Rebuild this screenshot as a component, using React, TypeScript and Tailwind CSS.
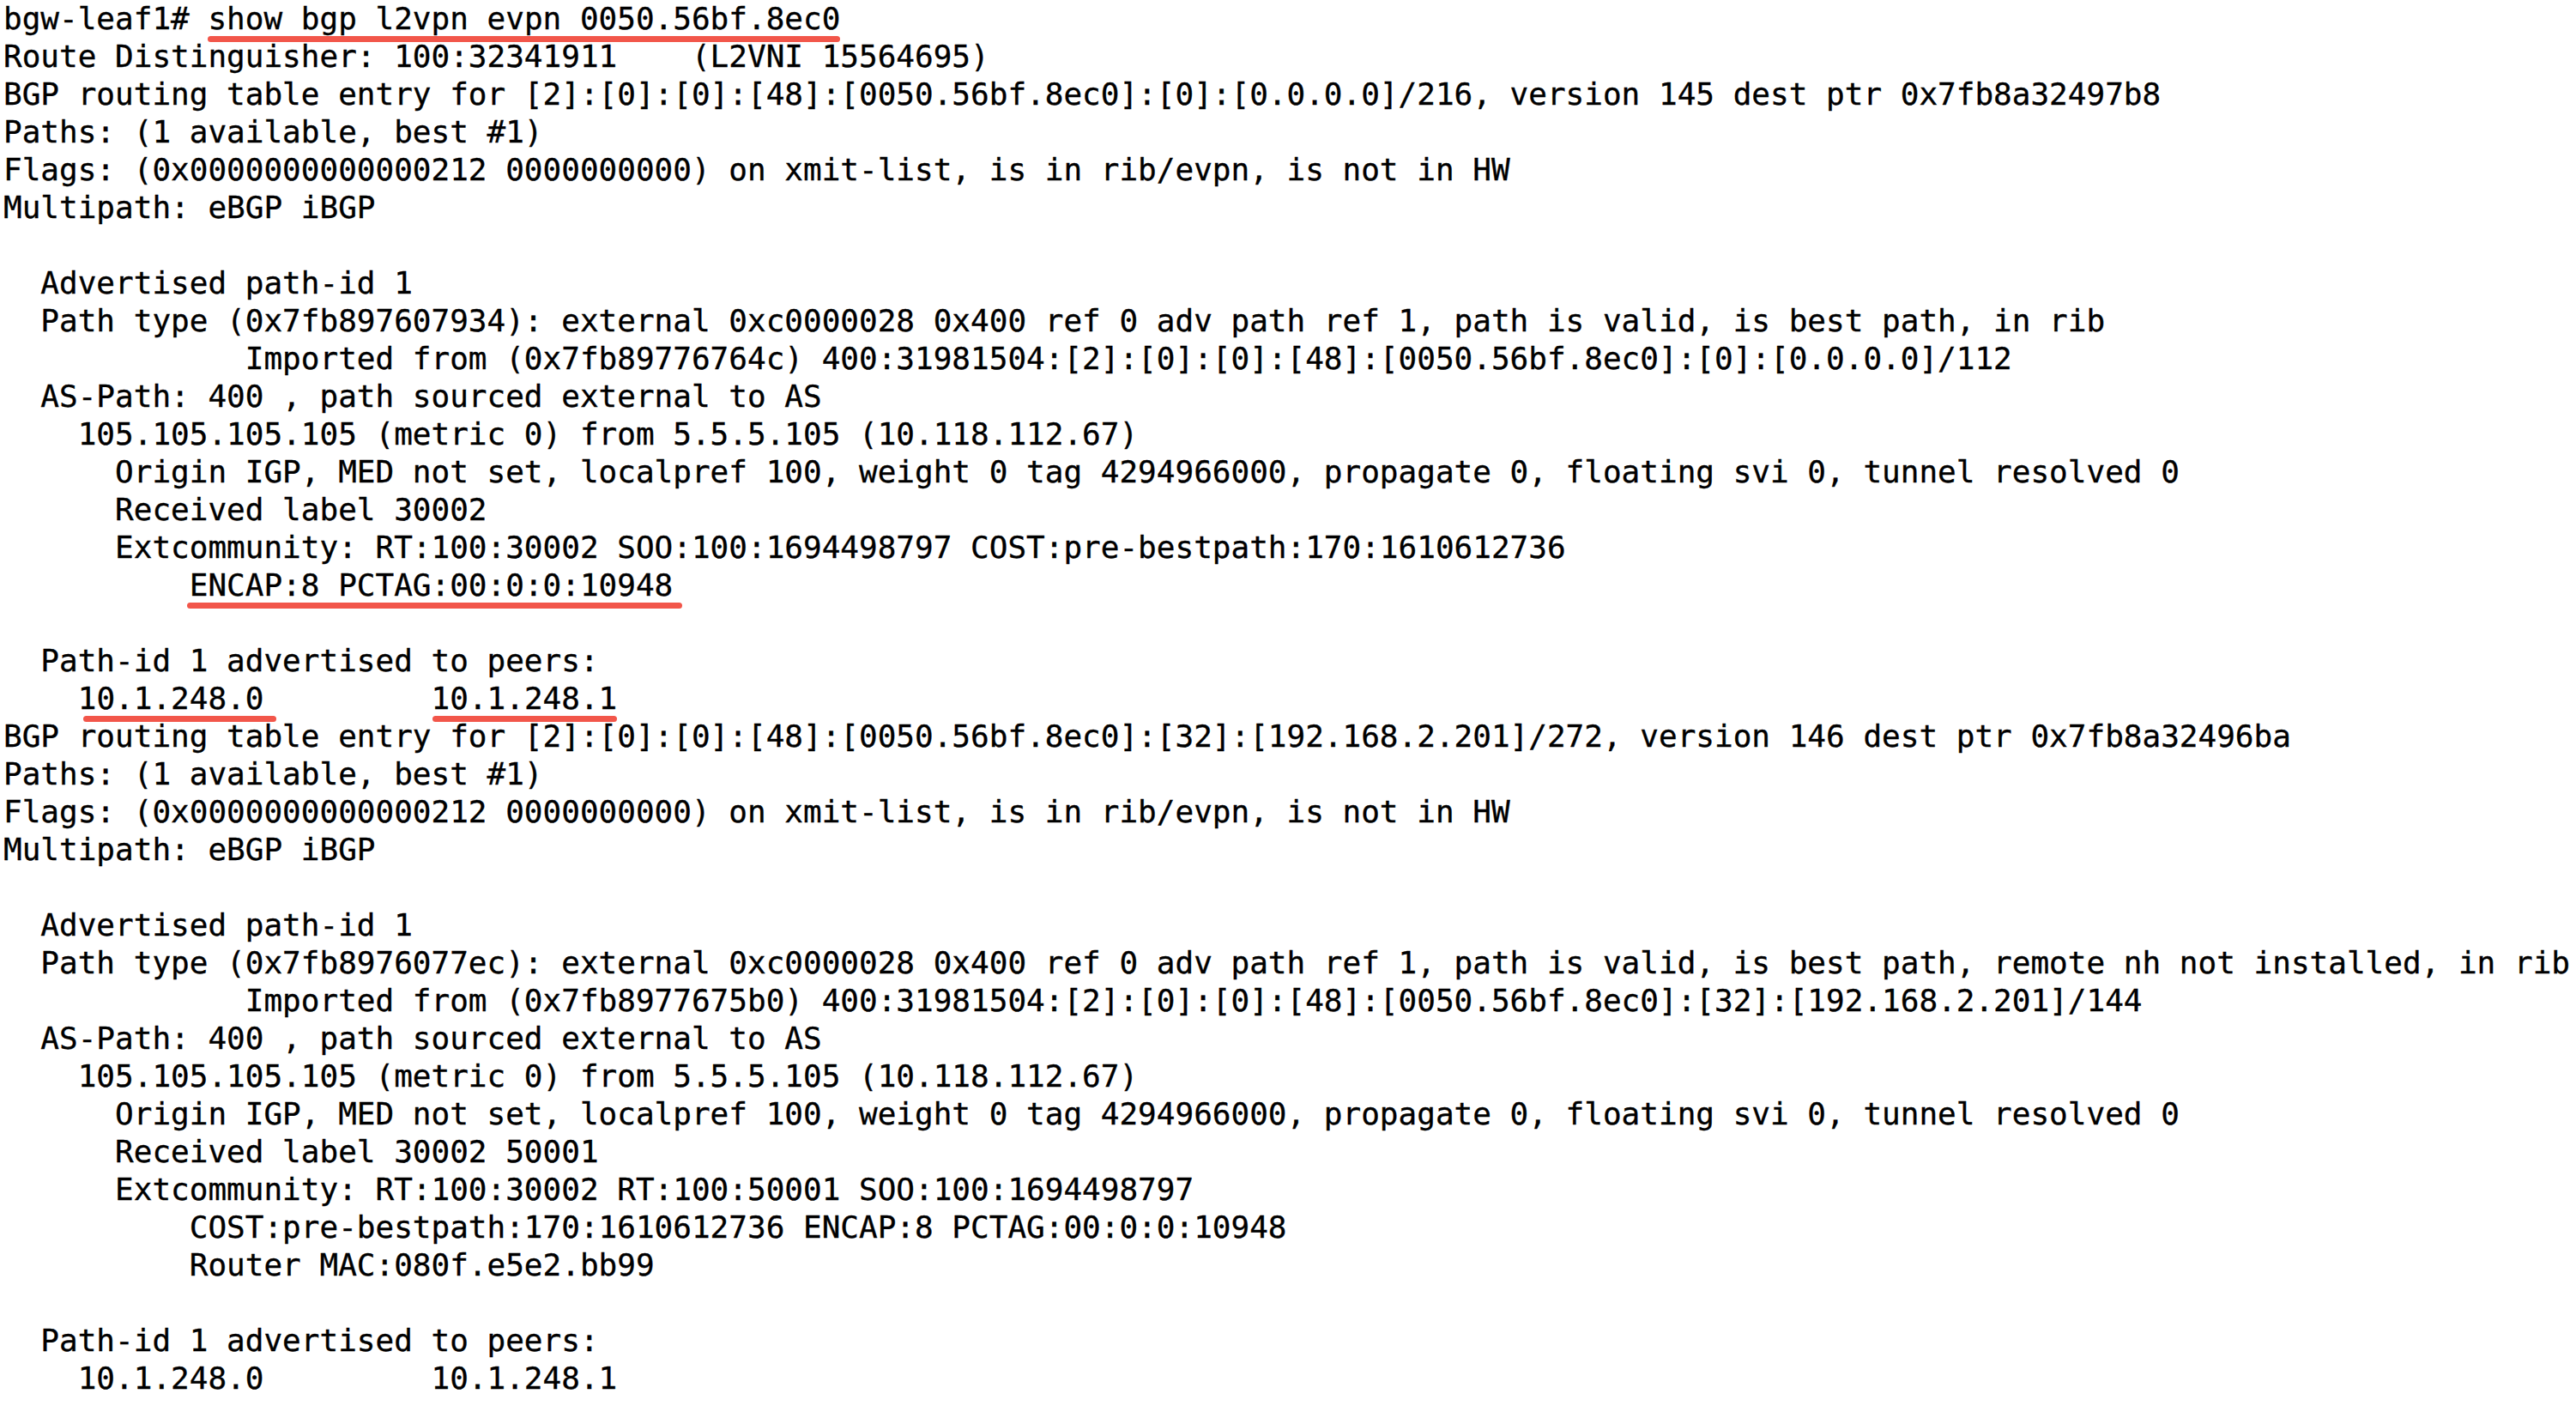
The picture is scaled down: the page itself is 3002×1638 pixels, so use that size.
import React from "react";

type Seg = { t: string; u?: string };

const L = (...segs: (string | Seg)[]) =>
  segs.map((s) => (typeof s === "string" ? { t: s } : s));

// hand-drawn marker strokes don't line up exactly with the text, so each gets its own offsets
const U1 = "left-[0px] right-[0px]";
const U2 = "left-[-3px] right-[-11px]";
const U3 = "left-[6px] right-[-15px]";
const U4 = "left-[1px] right-[0px]";

const lines: Seg[][] = [
  L("bgw-leaf1# ", { t: "show bgp l2vpn evpn 0050.56bf.8ec0", u: U1 }),
  L("Route Distinguisher: 100:32341911    (L2VNI 15564695)"),
  L("BGP routing table entry for [2]:[0]:[0]:[48]:[0050.56bf.8ec0]:[0]:[0.0.0.0]/216, version 145 dest ptr 0x7fb8a32497b8"),
  L("Paths: (1 available, best #1)"),
  L("Flags: (0x0000000000000212 0000000000) on xmit-list, is in rib/evpn, is not in HW"),
  L("Multipath: eBGP iBGP"),
  L(""),
  L("  Advertised path-id 1"),
  L("  Path type (0x7fb897607934): external 0xc0000028 0x400 ref 0 adv path ref 1, path is valid, is best path, in rib"),
  L("             Imported from (0x7fb89776764c) 400:31981504:[2]:[0]:[0]:[48]:[0050.56bf.8ec0]:[0]:[0.0.0.0]/112"),
  L("  AS-Path: 400 , path sourced external to AS"),
  L("    105.105.105.105 (metric 0) from 5.5.5.105 (10.118.112.67)"),
  L("      Origin IGP, MED not set, localpref 100, weight 0 tag 4294966000, propagate 0, floating svi 0, tunnel resolved 0"),
  L("      Received label 30002"),
  L("      Extcommunity: RT:100:30002 SOO:100:1694498797 COST:pre-bestpath:170:1610612736"),
  L("          ", { t: "ENCAP:8 PCTAG:00:0:0:10948", u: U2 }),
  L(""),
  L("  Path-id 1 advertised to peers:"),
  L("    ", { t: "10.1.248.0", u: U3 }, "         ", { t: "10.1.248.1", u: U4 }),
  L("BGP routing table entry for [2]:[0]:[0]:[48]:[0050.56bf.8ec0]:[32]:[192.168.2.201]/272, version 146 dest ptr 0x7fb8a32496ba"),
  L("Paths: (1 available, best #1)"),
  L("Flags: (0x0000000000000212 0000000000) on xmit-list, is in rib/evpn, is not in HW"),
  L("Multipath: eBGP iBGP"),
  L(""),
  L("  Advertised path-id 1"),
  L("  Path type (0x7fb8976077ec): external 0xc0000028 0x400 ref 0 adv path ref 1, path is valid, is best path, remote nh not installed, in rib"),
  L("             Imported from (0x7fb8977675b0) 400:31981504:[2]:[0]:[0]:[48]:[0050.56bf.8ec0]:[32]:[192.168.2.201]/144"),
  L("  AS-Path: 400 , path sourced external to AS"),
  L("    105.105.105.105 (metric 0) from 5.5.5.105 (10.118.112.67)"),
  L("      Origin IGP, MED not set, localpref 100, weight 0 tag 4294966000, propagate 0, floating svi 0, tunnel resolved 0"),
  L("      Received label 30002 50001"),
  L("      Extcommunity: RT:100:30002 RT:100:50001 SOO:100:1694498797"),
  L("          COST:pre-bestpath:170:1610612736 ENCAP:8 PCTAG:00:0:0:10948"),
  L("          Router MAC:080f.e5e2.bb99"),
  L(""),
  L("  Path-id 1 advertised to peers:"),
  L("    10.1.248.0         10.1.248.1"),
];

export default function App() {
  return (
    <div className="w-[3002px] h-[1638px] overflow-hidden bg-white text-black">
      <div
        className="flex flex-col pl-[4px] text-[36px] leading-[44px] whitespace-pre [-webkit-text-stroke:0.35px_black]"
        style={{ fontFamily: '"DejaVu Sans Mono", "Liberation Mono", monospace' }}
      >
        {lines.map((segs, i) => (
          <div key={i} className="h-[44px]">
            {segs.map((s, j) =>
              s.u ? (
                <span key={j} className="relative">
                  {s.t}
                  <span
                    className={`absolute bottom-[-7px] h-[7px] rounded-full bg-[#f2564a] ${s.u}`}
                  />
                </span>
              ) : (
                <span key={j}>{s.t}</span>
              )
            )}
          </div>
        ))}
      </div>
    </div>
  );
}
